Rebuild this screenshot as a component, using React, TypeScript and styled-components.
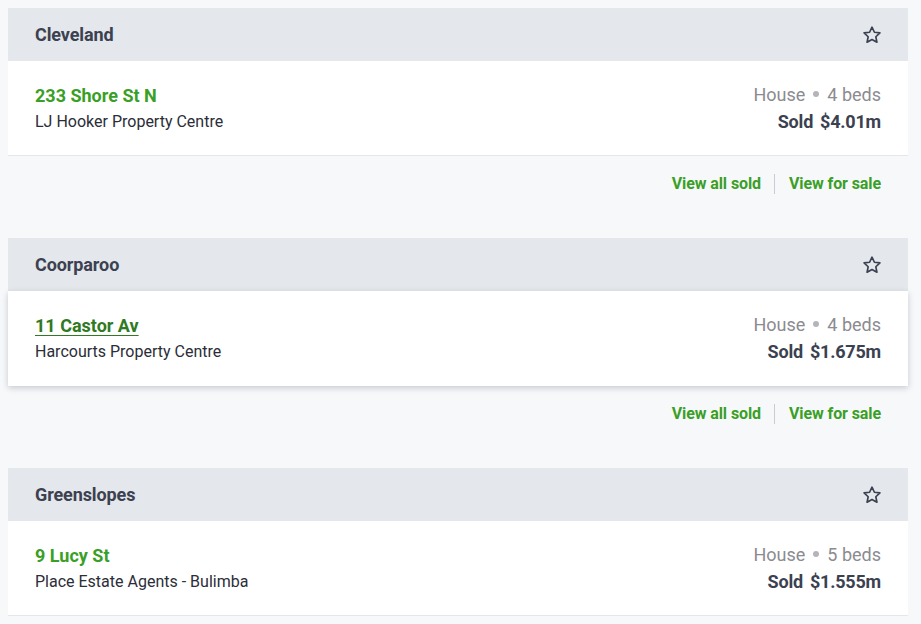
import React from 'react';
import styled, { createGlobalStyle } from 'styled-components';

const GlobalStyle = createGlobalStyle`
  html, body {
    margin: 0;
    padding: 0;
    background: #f6f8fa;
    font-family: Roboto, "Noto Sans", Arial, sans-serif;
  }
`;

const Page = styled.div`
  padding: 8px 13px 0 8px;
  display: flex;
  flex-direction: column;
`;

const Section = styled.section`
  display: flex;
  flex-direction: column;
`;

const Header = styled.div`
  height: 53px;
  background: #e4e7eb;
  display: flex;
  align-items: center;
  justify-content: space-between;
  padding: 0 26px 0 27px;
`;

const Suburb = styled.h2`
  margin: 0;
  font-size: 18px;
  font-weight: 700;
  letter-spacing: -0.1px;
  color: #3b4150;
`;

const StarButton = styled.button`
  border: 0;
  background: none;
  padding: 0;
  width: 21px;
  height: 21px;
  display: flex;
  align-items: center;
  justify-content: center;
  color: #3b4150;
  cursor: pointer;
`;

const Row = styled.div<{ $hover?: boolean }>`
  background: #fff;
  height: 95px;
  box-sizing: border-box;
  display: flex;
  justify-content: space-between;
  align-items: center;
  padding: 0 27px;
  border-bottom: 1px solid ${(p) => (p.$hover ? 'transparent' : '#e3e6ea')};
  box-shadow: ${(p) => (p.$hover ? '0 2px 6px rgba(30, 40, 60, 0.22)' : 'none')};
  position: relative;
`;

const Left = styled.div`
  display: flex;
  flex-direction: column;
  gap: 5px;
`;

const Address = styled.a<{ $hover?: boolean }>`
  font-size: 18px;
  font-weight: 700;
  color: ${(p) => (p.$hover ? '#2f7a22' : '#3a9f26')};
  text-decoration: ${(p) => (p.$hover ? 'underline' : 'none')};
  text-underline-offset: 3px;
  line-height: 22px;
`;

const Agency = styled.div`
  font-size: 16px;
  color: #2b2d38;
  line-height: 20px;
`;

const Right = styled.div`
  display: flex;
  flex-direction: column;
  align-items: flex-end;
  gap: 5px;
`;

const Meta = styled.div`
  font-size: 18px;
  color: #8b8b90;
  line-height: 22px;
`;

const Dot = styled.span`
  display: inline-block;
  width: 6px;
  height: 6px;
  border-radius: 50%;
  background: #b5b5b9;
  margin: 0 8px;
  vertical-align: middle;
  position: relative;
  top: -2px;
`;

const Price = styled.div`
  font-size: 18px;
  font-weight: 700;
  letter-spacing: -0.2px;
  color: #3b4150;
  line-height: 22px;
  display: flex;
  gap: 7px;
`;

const Links = styled.div`
  display: flex;
  justify-content: flex-end;
  align-items: center;
  height: 55px;
  padding: 0 27px 0 0;
  margin-bottom: 27px;
`;

const LinkItem = styled.a`
  font-size: 16px;
  font-weight: 700;
  letter-spacing: -0.1px;
  color: #3a9f26;
  text-decoration: none;
`;

const Divider = styled.span`
  width: 1px;
  height: 20px;
  background: #c9cdd3;
  margin: 0 14px 0 13px;
`;

const Star = () => (
  <svg width="20" height="20" viewBox="0 0 24 24" fill="none" stroke="currentColor" strokeWidth="2" strokeLinejoin="round">
    <path d="M12 2.6l2.9 6.1 6.6.8-4.9 4.6 1.3 6.6L12 17.4l-5.9 3.3 1.3-6.6-4.9-4.6 6.6-.8z" />
  </svg>
);

type Listing = {
  suburb: string;
  address: string;
  agency: string;
  beds: number;
  price: string;
  hover?: boolean;
  links?: boolean;
};

const listings: Listing[] = [
  { suburb: 'Cleveland', address: '233 Shore St N', agency: 'LJ Hooker Property Centre', beds: 4, price: '$4.01m', links: true },
  { suburb: 'Coorparoo', address: '11 Castor Av', agency: 'Harcourts Property Centre', beds: 4, price: '$1.675m', hover: true, links: true },
  { suburb: 'Greenslopes', address: '9 Lucy St', agency: 'Place Estate Agents - Bulimba', beds: 5, price: '$1.555m' },
];

const App = () => (
  <>
    <GlobalStyle />
    <Page>
      {listings.map((l) => (
        <Section key={l.suburb}>
          <Header>
            <Suburb>{l.suburb}</Suburb>
            <StarButton aria-label={`Save ${l.suburb}`}>
              <Star />
            </StarButton>
          </Header>
          <Row $hover={l.hover}>
            <Left>
              <Address href="#" $hover={l.hover}>{l.address}</Address>
              <Agency>{l.agency}</Agency>
            </Left>
            <Right>
              <Meta>
                House<Dot />{l.beds} beds
              </Meta>
              <Price>
                <span>Sold</span>
                <span>{l.price}</span>
              </Price>
            </Right>
          </Row>
          {l.links && (
            <Links>
              <LinkItem href="#">View all sold</LinkItem>
              <Divider />
              <LinkItem href="#">View for sale</LinkItem>
            </Links>
          )}
        </Section>
      ))}
    </Page>
  </>
);

export default App;
